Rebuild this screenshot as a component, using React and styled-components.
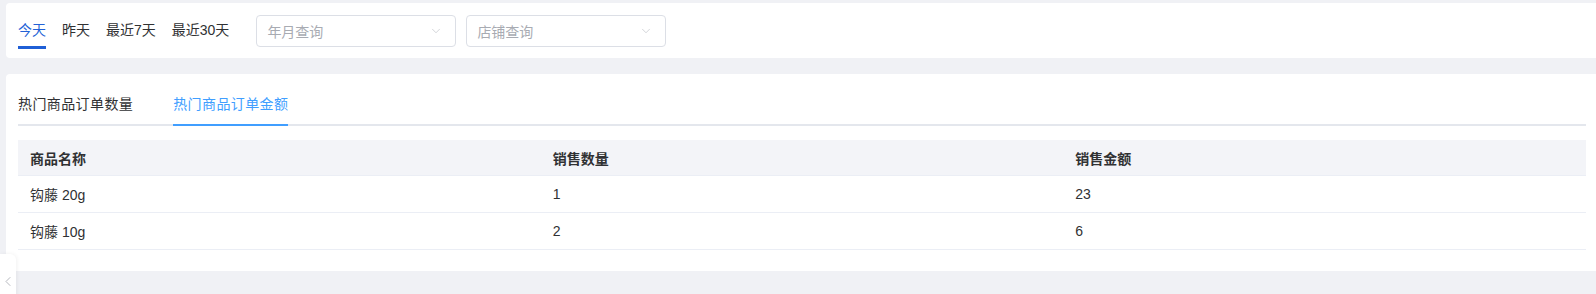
import { useState } from "react";
import styled, { createGlobalStyle } from "styled-components";
import { ChevronDown, ChevronLeft } from "lucide-react";

const GlobalStyle = createGlobalStyle`
    html, body {
        margin: 0;
        padding: 0;
        background: #f0f1f5;
        font-family: "Liberation Sans", "Noto Sans CJK SC", sans-serif;
        overflow: hidden;
    }
    * {
        box-sizing: border-box;
    }
`

const dateTabs = ["今天", "昨天", "最近7天", "最近30天"];
const rankTabs = ["热门商品订单数量", "热门商品订单金额"];
const rows = [
    { name: "钩藤 20g", count: 1, amount: 23 },
    { name: "钩藤 10g", count: 2, amount: 6 },
];

const App = () => {
    const [dateTab, setDateTab] = useState(0);
    const [rankTab, setRankTab] = useState(1);

    return (
        <Page>
            <GlobalStyle />
            <FilterCard>
                <DateTabs>
                    {dateTabs.map((t, i) => (
                        <DateTab key={t} $active={i === dateTab} onClick={() => setDateTab(i)}>{t}</DateTab>
                    ))}
                </DateTabs>
                <Select>
                    <Placeholder>年月查询</Placeholder>
                    <ChevronDown size={14} strokeWidth={1} color="#b4b7be" />
                </Select>
                <Select>
                    <Placeholder>店铺查询</Placeholder>
                    <ChevronDown size={14} strokeWidth={1} color="#b4b7be" />
                </Select>
            </FilterCard>

            <RankCard>
                <TabHeader>
                    {rankTabs.map((t, i) => (
                        <RankTab key={t} $active={i === rankTab} onClick={() => setRankTab(i)}>{t}</RankTab>
                    ))}
                </TabHeader>
                <Table>
                    <HeadRow>
                        <HeadCell>商品名称</HeadCell>
                        <HeadCell>销售数量</HeadCell>
                        <HeadCell>销售金额</HeadCell>
                    </HeadRow>
                    {rows.map(r => (
                        <BodyRow key={r.name}>
                            <Cell>{r.name}</Cell>
                            <Cell>{r.count}</Cell>
                            <Cell>{r.amount}</Cell>
                        </BodyRow>
                    ))}
                </Table>
            </RankCard>

            <CollapseButton>
                <ChevronLeft size={17} strokeWidth={1.2} color="#a3a6ad" />
            </CollapseButton>
        </Page>
    );
}

const Page = styled.div`
    width: 1596px;
    height: 294px;
    padding: 3px 0 0 6px;
    display: flex;
    flex-direction: column;
    gap: 16px;
`

const FilterCard = styled.div`
    background: #fff;
    border-radius: 4px 0 0 4px;
    height: 55px;
    padding: 12px 12px 11px 12px;
    display: flex;
    align-items: flex-start;
    gap: 10px;
`

const DateTabs = styled.div`
    display: flex;
    gap: 16px;
    margin-right: 17px;
`

const DateTab = styled.div`
    font-size: 14px;
    line-height: 31px;
    height: 34px;
    color: ${p => p.$active ? "#2362d6" : "#303133"};
    border-bottom: 3px solid ${p => p.$active ? "#1f5fd6" : "transparent"};
    cursor: pointer;
    white-space: nowrap;
`

const Select = styled.div`
    width: 200px;
    height: 32px;
    border: 1px solid #dcdfe6;
    border-radius: 4px;
    padding: 0 12px 0 10px;
    display: flex;
    align-items: center;
    justify-content: space-between;
`

const Placeholder = styled.span`
    font-size: 14px;
    color: #a8abb2;
`

const RankCard = styled.div`
    background: #fff;
    border-radius: 4px 0 0 4px;
    height: 197px;
    padding: 10px 10px 0 12px;
`

const TabHeader = styled.div`
    display: flex;
    gap: 40px;
    border-bottom: 2px solid #e4e7ed;
    margin-bottom: 14px;
    height: 42px;
`

const RankTab = styled.div`
    font-size: 14px;
    letter-spacing: 0.4px;
    height: 42px;
    line-height: 40px;
    margin-bottom: -2px;
    color: ${p => p.$active ? "#409eff" : "#303133"};
    border-bottom: 2px solid ${p => p.$active ? "#409eff" : "transparent"};
    cursor: pointer;
`

const Table = styled.div`
    width: 1568px;
    display: flex;
    flex-direction: column;
`

const HeadRow = styled.div`
    display: grid;
    grid-template-columns: repeat(3, 1fr);
    height: 36px;
    background: #f3f4f8;
    border-bottom: 1px solid #ebeef5;
`

const BodyRow = styled.div`
    display: grid;
    grid-template-columns: repeat(3, 1fr);
    height: 37px;
    border-bottom: 1px solid #ebeef5;
`

const HeadCell = styled.div`
    padding-left: 12px;
    display: flex;
    align-items: center;
    font-size: 14px;
    font-weight: 700;
    color: #303133;
`

const Cell = styled.div`
    padding-left: 12px;
    display: flex;
    align-items: center;
    font-size: 14px;
    color: #303133;
`

const CollapseButton = styled.div`
    position: fixed;
    left: 0;
    top: 254px;
    width: 16px;
    height: 54px;
    background: #fff;
    border-radius: 0 6px 6px 0;
    box-shadow: 1px 0 4px rgba(0, 0, 0, 0.06);
    display: flex;
    align-items: center;
    justify-content: flex-start;
`

export default App;
